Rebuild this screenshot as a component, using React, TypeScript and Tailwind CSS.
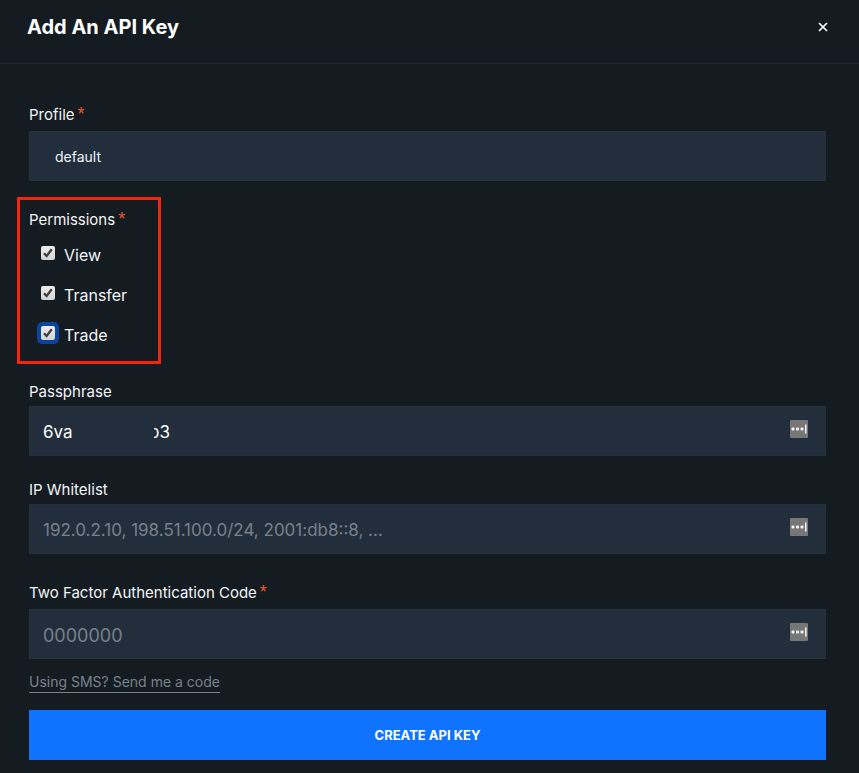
import { useState } from "react";
import type { ReactNode } from "react";

function Star() {
  return (
    <span className="ml-[3px] font-['Liberation_Sans',sans-serif] text-lg leading-none text-[#e8562a]" aria-hidden="true">
      *
    </span>
  );
}

function Label({ htmlFor, required, children }: { htmlFor: string; required?: boolean; children: ReactNode }) {
  return (
    <label htmlFor={htmlFor} className={`block h-5 text-[15px] leading-5 text-gray-100 ${required ? "mb-[6px]" : "mb-1"}`}>
      {children}
      {required && <Star />}
    </label>
  );
}

function PasswordBadge() {
  return (
    <svg viewBox="0 0 18 18" className="pointer-events-none absolute top-[14px] right-[18px] size-[18px]" aria-hidden="true">
      <rect width="18" height="18" rx="1" fill="#777777" />
      <rect x="1.5" y="7.5" width="3" height="3" rx="1" fill="#f1f1f1" />
      <rect x="6" y="7.5" width="3" height="3" rx="1" fill="#f1f1f1" />
      <rect x="10.5" y="7.5" width="3" height="3" rx="1" fill="#f1f1f1" />
      <rect x="15" y="4.5" width="1.5" height="9" fill="#f1f1f1" />
    </svg>
  );
}

const fieldClass =
  "block h-[50px] w-full rounded-none border border-[#27313c] bg-[#232e3c] pt-0.5 pr-12 pl-[13px] text-white outline-none placeholder:text-[#78808a]";

function Permission({ name, focused }: { name: string; focused?: boolean }) {
  const [checked, setChecked] = useState(true);
  return (
    <label className="flex h-10 items-center pl-3 text-base leading-6 text-gray-100">
      <span className={`relative mr-[9px] mb-1 block size-[14px] rounded-[2px] ${focused ? "ring-4 ring-[#0b449f]" : ""}`}>
        <input
          type="checkbox"
          checked={checked}
          onChange={(e) => setChecked(e.target.checked)}
          className="block size-[14px] appearance-none rounded-[2px] bg-linear-to-b from-[#eeeeee] to-[#d4d4d4] outline-none"
        />
        {checked && (
          <svg viewBox="0 0 14 14" className="pointer-events-none absolute inset-0 size-[14px]" fill="none" aria-hidden="true">
            <path d="M3 7.2 5.6 10 10.8 3.2" stroke="#414141" strokeWidth="2.4" />
          </svg>
        )}
      </span>
      {name}
    </label>
  );
}

export default function App() {
  const [passphrase, setPassphrase] = useState("6va" + "\u00a0".repeat(16) + "b3");
  return (
    <main className="min-h-screen bg-[#141c22] font-[Inter,'Liberation_Sans',sans-serif] text-white">
      <header className="flex h-16 items-start justify-between border-b border-[#222b33] pt-3 pr-[31px] pl-[27px]">
        <h1 className="text-xl leading-[30px] font-bold">Add An API Key</h1>
        <button type="button" aria-label="Close" className="flex h-[30px] w-[10px] items-center justify-center">
          <svg viewBox="0 0 10 10" className="size-[10px]" aria-hidden="true">
            <path d="M1 1 9 9M9 1 1 9" stroke="white" strokeWidth="1.7" />
          </svg>
        </button>
      </header>

      <form className="pt-[41px] pr-[33px] pb-[13px] pl-[29px]" onSubmit={(e) => e.preventDefault()}>
        <Label htmlFor="profile" required>Profile</Label>
        <select id="profile" className="block h-[50px] w-full appearance-none rounded-none border border-[#27313c] bg-[#232e3c] px-[25px] pt-0.5 text-sm text-gray-100 outline-none">
          <option>default</option>
        </select>

        <div role="group" aria-labelledby="permissions" className="mt-4 -ml-3 h-[167px] w-[144px] border-3 border-[#f72408] pt-[10px] pl-[9px]">
          <div id="permissions" className="mb-[5px] h-5 text-[15px] leading-5 text-gray-100">
            Permissions<Star />
          </div>
          <Permission name="View" />
          <Permission name="Transfer" />
          <Permission name="Trade" focused />
        </div>

        <div className="mt-[18px]">
          <Label htmlFor="passphrase">Passphrase</Label>
          <div className="relative">
            <input id="passphrase" className={`${fieldClass} text-[17px]`} value={passphrase} onChange={(e) => setPassphrase(e.target.value)} />
            <span className="pointer-events-none absolute top-3 left-[116px] h-6 w-[9px] bg-[#232e3c]" aria-hidden="true" />
            <PasswordBadge />
          </div>
        </div>

        <div className="mt-6">
          <Label htmlFor="whitelist">IP Whitelist</Label>
          <div className="relative">
            <input id="whitelist" className={`${fieldClass} text-[17px]`} placeholder="192.0.2.10, 198.51.100.0/24, 2001:db8::8, ..." />
            <PasswordBadge />
          </div>
        </div>

        <div className="mt-[29px]">
          <Label htmlFor="code" required>Two Factor Authentication Code</Label>
          <div className="relative">
            <input id="code" className={`${fieldClass} text-lg`} placeholder="0000000" />
            <PasswordBadge />
          </div>
        </div>

        <div className="mt-[13px] flex">
          <a href="#sms" className="border-b border-[#78828d] text-sm leading-5 text-[#78828d]">Using SMS? Send me a code</a>
        </div>
        <button type="submit" className="mt-[17px] block h-[50px] w-full bg-[#1073ff] pt-0.5 text-[13px] font-bold text-white">
          CREATE API KEY
        </button>
      </form>
    </main>
  );
}
